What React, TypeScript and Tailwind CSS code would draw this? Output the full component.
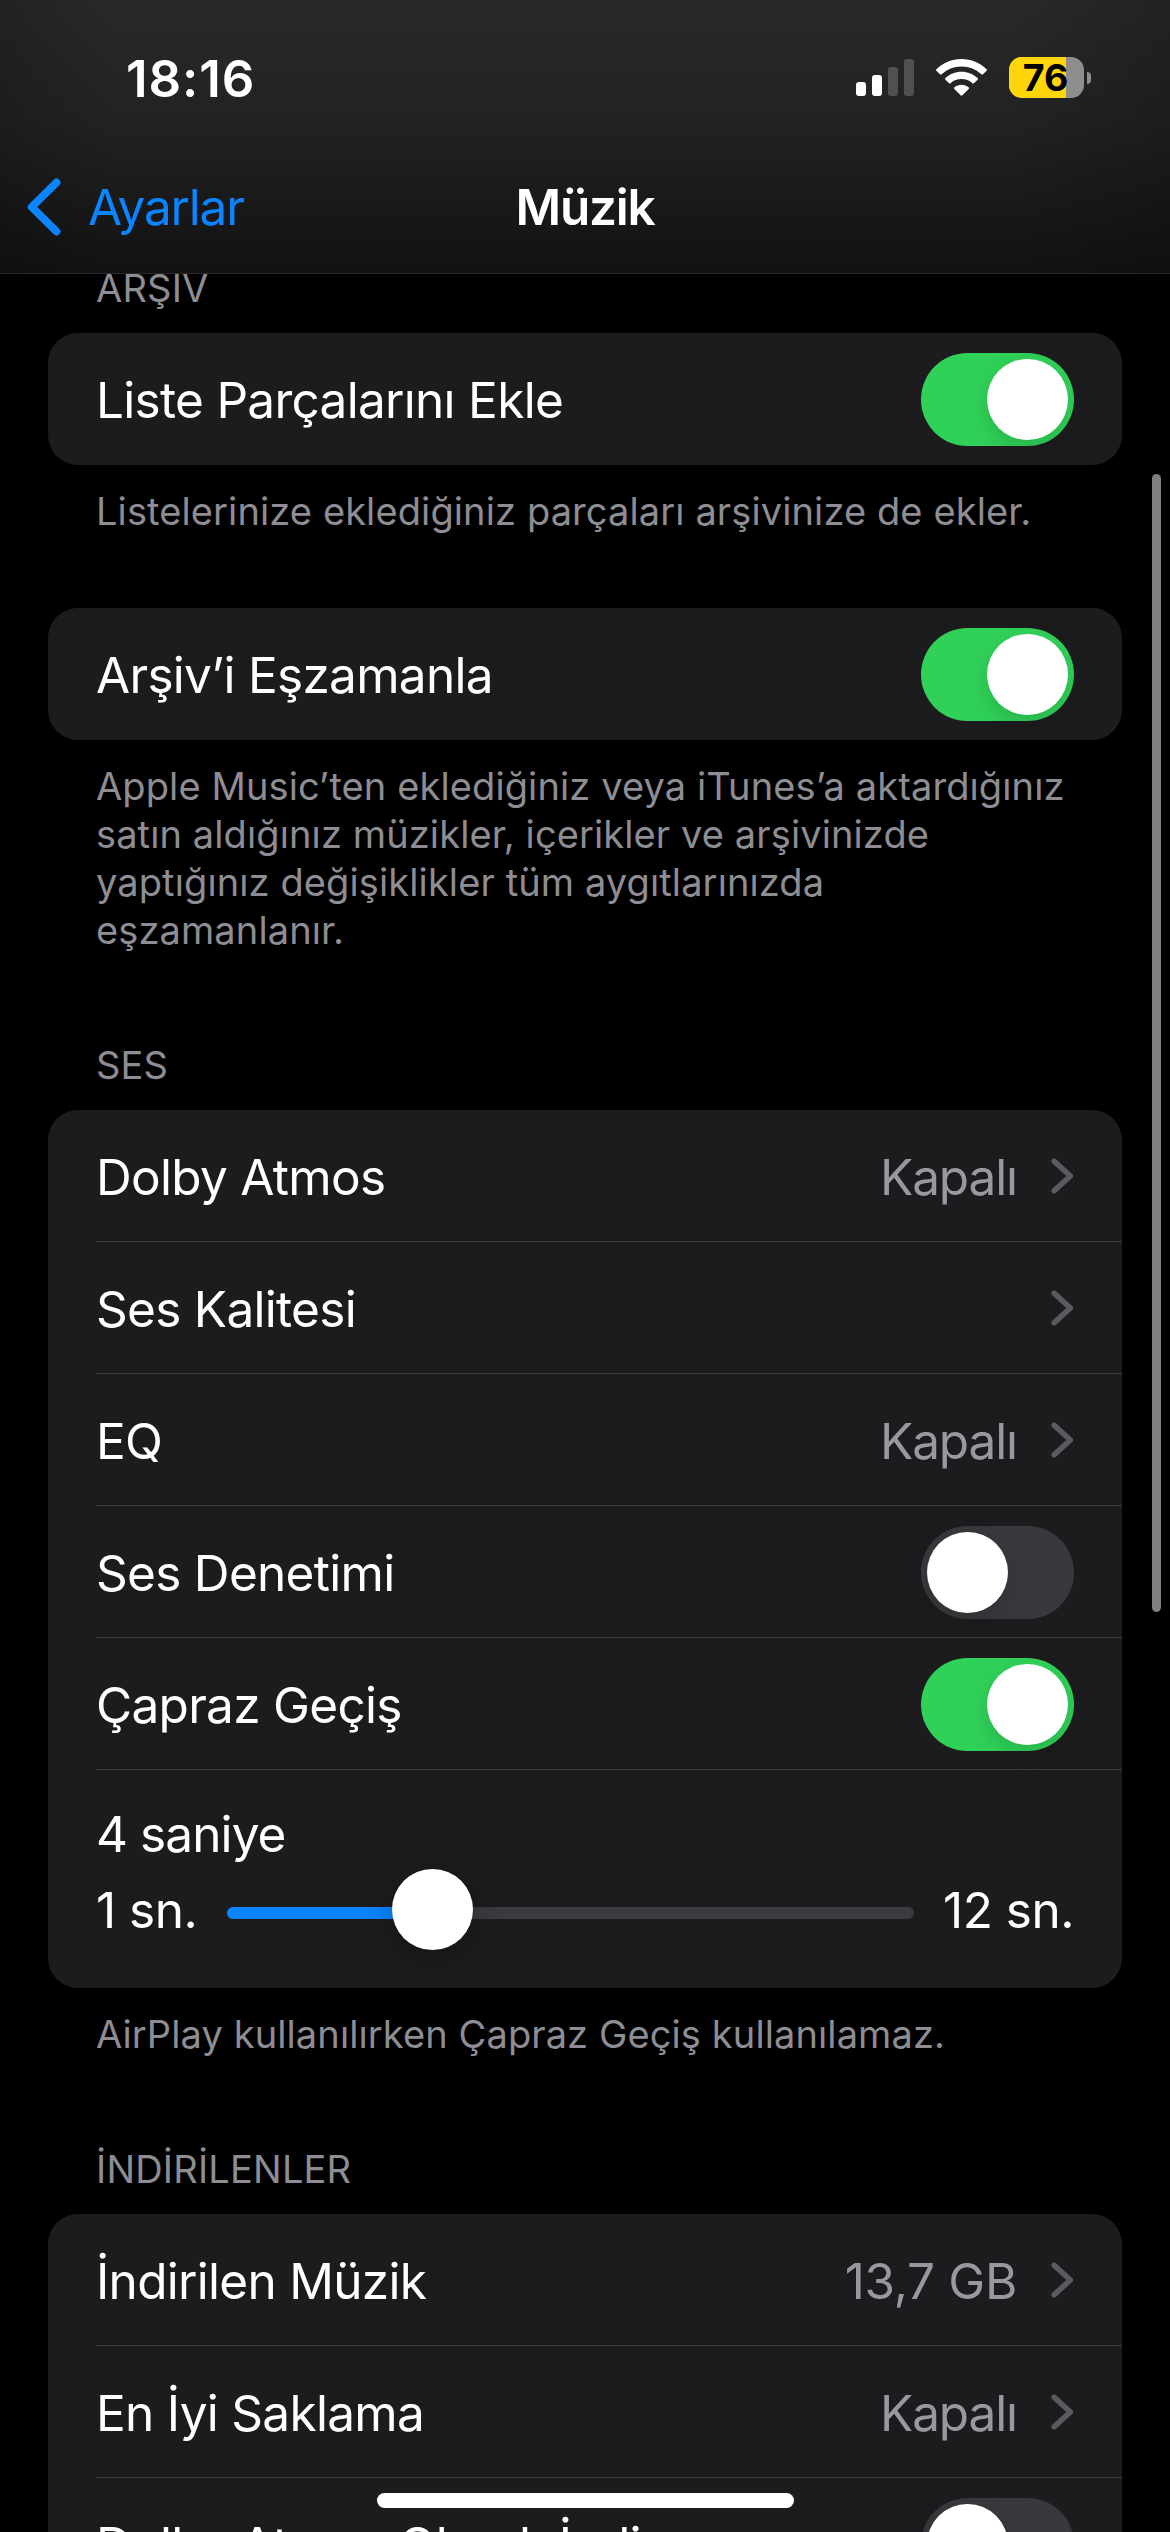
import React from "react";

function Toggle({ on = false }: { on?: boolean }) {
  return (
    <div
      className={`mt-px flex h-[93px] w-[153px] shrink-0 items-center rounded-full px-1.5 ${
        on ? "justify-end bg-[#30d158]" : "justify-start bg-[#39393d]"
      }`}
    >
      <div className="h-[81px] w-[81px] rounded-full bg-white shadow-[0_8px_22px_rgba(0,0,0,0.15)]" />
    </div>
  );
}

function Chevron() {
  return (
    <svg className="h-[36px] w-[23px] shrink-0" viewBox="0 0 23 36" fill="none">
      <path
        d="M3.2 3.2 19.3 18 3.2 32.8"
        stroke="#5a5a5f"
        strokeWidth="5.6"
        strokeLinecap="round"
        strokeLinejoin="round"
      />
    </svg>
  );
}

type RowProps = {
  label: string;
  value?: string;
  /** Tracking class for the value */
  valueTracking?: string;
  toggle?: "on" | "off";
  last?: boolean;
};

function Row({
  label,
  value,
  valueTracking = "tracking-[-1.1px]",
  toggle,
  last = false,
}: RowProps) {
  return (
    <div
      className={`ml-12 flex h-[132px] items-center justify-between pr-12 ${
        last ? "" : "border-b border-[#3d3d41]"
      }`}
    >
      <span className="pt-0.5 text-[49.5px] leading-[60px] tracking-[-0.7px] text-white">
        {label}
      </span>
      {toggle ? (
        <Toggle on={toggle === "on"} />
      ) : (
        <div className="flex items-center gap-[34px]">
          {value && (
            <span
              className={`pt-0.5 text-[49.5px] leading-[60px] text-[#98989f] ${valueTracking}`}
            >
              {value}
            </span>
          )}
          <Chevron />
        </div>
      )}
    </div>
  );
}

function Card({ children }: { children: React.ReactNode }) {
  return (
    <div className="mx-12 overflow-hidden rounded-[30px] bg-[#1c1c1e]">{children}</div>
  );
}

function GroupTitle({ children }: { children: React.ReactNode }) {
  return (
    <h2 className="h-[69px] pl-24 text-[38px] leading-[48px] tracking-[0.2px] text-[#8d8d93]">
      {children}
    </h2>
  );
}

function Footer({ children }: { children: React.ReactNode }) {
  return (
    <p className="pl-24 pt-[22px] text-[38px] leading-[48px] tracking-[0.11px] whitespace-nowrap text-[#8d8d93]">
      {children}
    </p>
  );
}

function CrossfadeSlider() {
  return (
    <div className="h-[218px] px-12 pt-[34px] text-[49.5px] leading-[60px] tracking-[-0.5px] text-white">
      <div className="tracking-[-0.9px]">4 saniye</div>
      <div className="mt-4 flex items-center justify-between">
        <span>1 sn.</span>
        <div className="relative mt-1.5 h-3 w-[687px] rounded-full bg-[#3b3b3f]">
          <div className="h-3 w-[200px] rounded-full bg-[#0a84ff]" />
          <div className="absolute -top-[38px] left-[165px] h-[81px] w-[81px] rounded-full bg-white shadow-[0_6px_30px_rgba(0,0,0,0.3)]" />
        </div>
        <span>12 sn.</span>
      </div>
    </div>
  );
}

function SignalIcon() {
  return (
    <svg className="h-[37px] w-[58px]" viewBox="0 0 58 37">
      <rect x="0" y="23" width="10" height="14" rx="3" fill="#fff" />
      <rect x="16" y="16" width="10" height="21" rx="3" fill="#fff" />
      <rect x="32" y="8" width="10" height="29" rx="3" fill="#505051" />
      <rect x="48" y="0" width="10" height="37" rx="3" fill="#505051" />
    </svg>
  );
}

function WifiIcon() {
  return (
    <svg className="h-[37px] w-[51px]" viewBox="0 0 51 37" fill="#fff">
      <path d="M25.5 0C35.3 0 44.2 3.8 50.6 10.2 51.1 10.7 51.1 11.3 50.6 11.8L47 15.3C46.5 15.8 45.9 15.8 45.4 15.3 40.2 10.4 33.2 7.4 25.5 7.4S10.8 10.4 5.6 15.3C5.1 15.8 4.5 15.8 4 15.3L.4 11.8C-.1 11.3-.1 10.7.4 10.2 6.8 3.8 15.7 0 25.5 0Z" />
      <path d="M25.5 12.8C31.7 12.8 37.4 15.2 41.6 19.1 42.1 19.6 42.1 20.2 41.6 20.7L37.9 24.2C37.4 24.7 36.9 24.7 36.4 24.2 33.5 21.6 29.7 20.1 25.5 20.1S17.5 21.6 14.6 24.2C14.1 24.7 13.6 24.7 13.1 24.2L9.4 20.7C8.9 20.2 8.9 19.6 9.4 19.1 13.6 15.2 19.3 12.8 25.5 12.8Z" />
      <path d="M25.5 25.7C28.2 25.7 30.7 26.7 32.6 28.3 33.2 28.8 33.2 29.4 32.7 29.9L26.4 36.3C25.8 36.9 25.2 36.9 24.6 36.3L18.3 29.9C17.8 29.4 17.8 28.8 18.4 28.3 20.3 26.7 22.8 25.7 25.5 25.7Z" />
    </svg>
  );
}

function Battery({ level }: { level: number }) {
  return (
    <div className="flex items-center gap-[3px]">
      <div className="relative h-[41px] w-[75px]">
        <div className="h-full overflow-hidden rounded-[13px] bg-[#8e8e8f]">
          <div className="h-full bg-[#ffd60a]" style={{ width: `${level}%` }} />
        </div>
        <span className="absolute inset-0 pr-0.5 text-center text-[37.5px] leading-[41px] font-bold text-black">
          {level}
        </span>
      </div>
      <div className="h-3 w-1 rounded-r-full bg-[#8e8e8f]" />
    </div>
  );
}

function Header() {
  return (
    <header className="relative z-10 h-[274px] border-b border-[#2a2a2b] bg-linear-to-b from-[#29292a] via-[#222223] via-45% to-[#121212] text-white">
      {/* darker towards both sides */}
      <div className="h-full bg-[linear-gradient(90deg,rgba(0,0,0,0.17),transparent_10%,transparent_86%,rgba(0,0,0,0.17))]">
        <div className="flex h-[154px] items-center justify-between pr-[79px] pl-[126px]">
          <span className="pt-[3px] text-[51px] leading-[60px] font-semibold tracking-[0.9px]">
            18:16
          </span>
          <div className="flex items-center pt-px">
            <SignalIcon />
            <div className="ml-[22px]">
              <WifiIcon />
            </div>
            <div className="ml-[22px]">
              <Battery level={76} />
            </div>
          </div>
        </div>
        <div className="grid h-[106px] grid-cols-3 items-center">
          <div className="flex items-center pl-[27px] text-[#0a84ff]">
            <svg className="h-[58px] w-[34px]" viewBox="0 0 34 58" fill="none">
              <path
                d="M29.5 4.5 4.7 29 29.5 53.5"
                stroke="currentColor"
                strokeWidth="7.8"
                strokeLinecap="round"
                strokeLinejoin="round"
              />
            </svg>
            <span className="pl-[27px] text-[49.5px] leading-[60px] tracking-[-1.2px]">
              Ayarlar
            </span>
          </div>
          <h1 className="text-center text-[49.5px] leading-[60px] font-semibold tracking-[-1.2px]">
            Müzik
          </h1>
        </div>
      </div>
    </header>
  );
}

export default function App() {
  return (
    <div className="relative h-[2532px] w-[1170px] overflow-hidden bg-black font-[Inter,'Liberation_Sans',sans-serif]">
      <Header />

      <main className="-mt-2.5">
        <section className="h-[344px]">
          <GroupTitle>ARŞİV</GroupTitle>
          <Card>
            <Row label="Liste Parçalarını Ekle" toggle="on" last />
          </Card>
          <Footer>Listelerinize eklediğiniz parçaları arşivinize de ekler.</Footer>
        </section>

        <section className="h-[433px]">
          <Card>
            <Row label="Arşiv’i Eşzamanla" toggle="on" last />
          </Card>
          <Footer>
            Apple Music’ten eklediğiniz veya iTunes’a aktardığınız
            <br />
            satın aldığınız müzikler, içerikler ve arşivinizde
            <br />
            yaptığınız değişiklikler tüm aygıtlarınızda
            <br />
            eşzamanlanır.
          </Footer>
        </section>

        <section className="h-[1104px]">
          <GroupTitle>SES</GroupTitle>
          <Card>
            <Row label="Dolby Atmos" value="Kapalı" />
            <Row label="Ses Kalitesi" />
            <Row label="EQ" value="Kapalı" />
            <Row label="Ses Denetimi" toggle="off" />
            <Row label="Çapraz Geçiş" toggle="on" />
            <CrossfadeSlider />
          </Card>
          <Footer>AirPlay kullanılırken Çapraz Geçiş kullanılamaz.</Footer>
        </section>

        <section>
          <GroupTitle>İNDİRİLENLER</GroupTitle>
          <Card>
            <Row
              label="İndirilen Müzik"
              value="13,7 GB"
              valueTracking="tracking-[-0.3px]"
            />
            <Row label="En İyi Saklama" value="Kapalı" />
            <Row label="Dolby Atmos Olarak İndir" toggle="off" />
          </Card>
        </section>
      </main>

      {/* scroll indicator */}
      <div className="absolute top-[474px] right-[9px] h-[1138px] w-[9px] rounded-full bg-[#7f7f7f]" />
      {/* home indicator */}
      <div className="absolute bottom-6 left-[377px] h-[15px] w-[417px] rounded-full bg-white" />
    </div>
  );
}
